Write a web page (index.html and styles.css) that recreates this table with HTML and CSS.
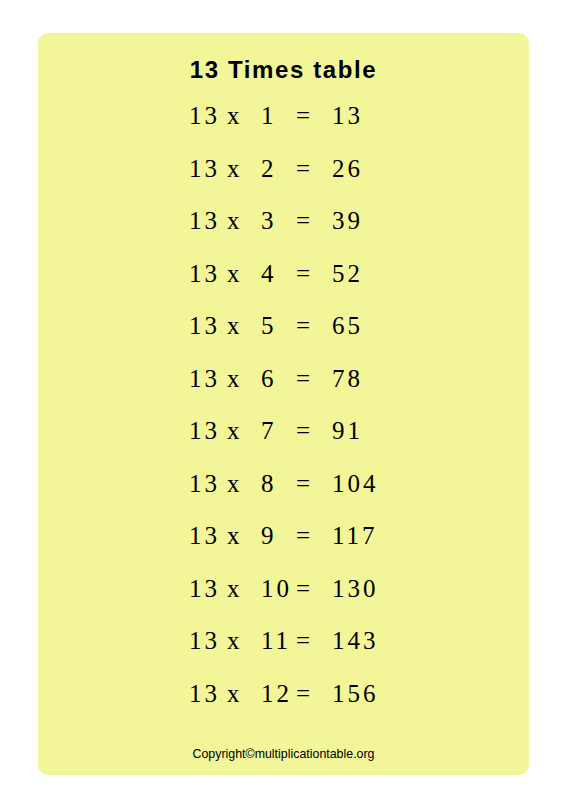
FILE: index.html
```html
<!DOCTYPE html>
<html>
<head>
<meta charset="utf-8">
<link rel="stylesheet" href="styles.css">
</head>
<body>
<div class="card">
  <h1 class="title">13 Times table</h1>
  <div class="table">
    <div class="row"><span>13</span><span>x</span><span>1</span><span>=</span><span>13</span></div>
    <div class="row"><span>13</span><span>x</span><span>2</span><span>=</span><span>26</span></div>
    <div class="row"><span>13</span><span>x</span><span>3</span><span>=</span><span>39</span></div>
    <div class="row"><span>13</span><span>x</span><span>4</span><span>=</span><span>52</span></div>
    <div class="row"><span>13</span><span>x</span><span>5</span><span>=</span><span>65</span></div>
    <div class="row"><span>13</span><span>x</span><span>6</span><span>=</span><span>78</span></div>
    <div class="row"><span>13</span><span>x</span><span>7</span><span>=</span><span>91</span></div>
    <div class="row"><span>13</span><span>x</span><span>8</span><span>=</span><span>104</span></div>
    <div class="row"><span>13</span><span>x</span><span>9</span><span>=</span><span>117</span></div>
    <div class="row"><span>13</span><span>x</span><span>10</span><span>=</span><span>130</span></div>
    <div class="row"><span>13</span><span>x</span><span>11</span><span>=</span><span>143</span></div>
    <div class="row"><span>13</span><span>x</span><span>12</span><span>=</span><span>156</span></div>
  </div>
  <p class="copy">Copyright©multiplicationtable.org</p>
</div>
</body>
</html>
```
FILE: styles.css
```css
html, body {
  margin: 0;
  padding: 0;
  background: #ffffff;
}
.card {
  box-sizing: border-box;
  margin: 33px 0 0 38px;
  width: 491px;
  height: 742px;
  background: #f2f698;
  border-radius: 10px;
  padding-top: 21px;
  display: flex;
  flex-direction: column;
}
.title {
  margin: 0;
  font-family: "Liberation Sans", Arial, sans-serif;
  font-weight: bold;
  font-size: 24px;
  letter-spacing: 1.6px;
  line-height: 32px;
  text-align: center;
  color: #000;
}
.table {
  margin-top: 4px;
  padding-left: 151px;
  font-family: "Liberation Serif", "Times New Roman", serif;
  font-size: 25px;
  letter-spacing: 3px;
  color: #000;
}
.row {
  display: grid;
  grid-template-columns: 38px 34px 35px 36px auto;
  height: 52.5px;
  line-height: 52.5px;
}
.copy {
  margin: auto 0 0 0;
  padding-bottom: 14px;
  font-family: "Liberation Sans", Arial, sans-serif;
  font-size: 12.4px;
  text-align: center;
  color: #000;
}
```
